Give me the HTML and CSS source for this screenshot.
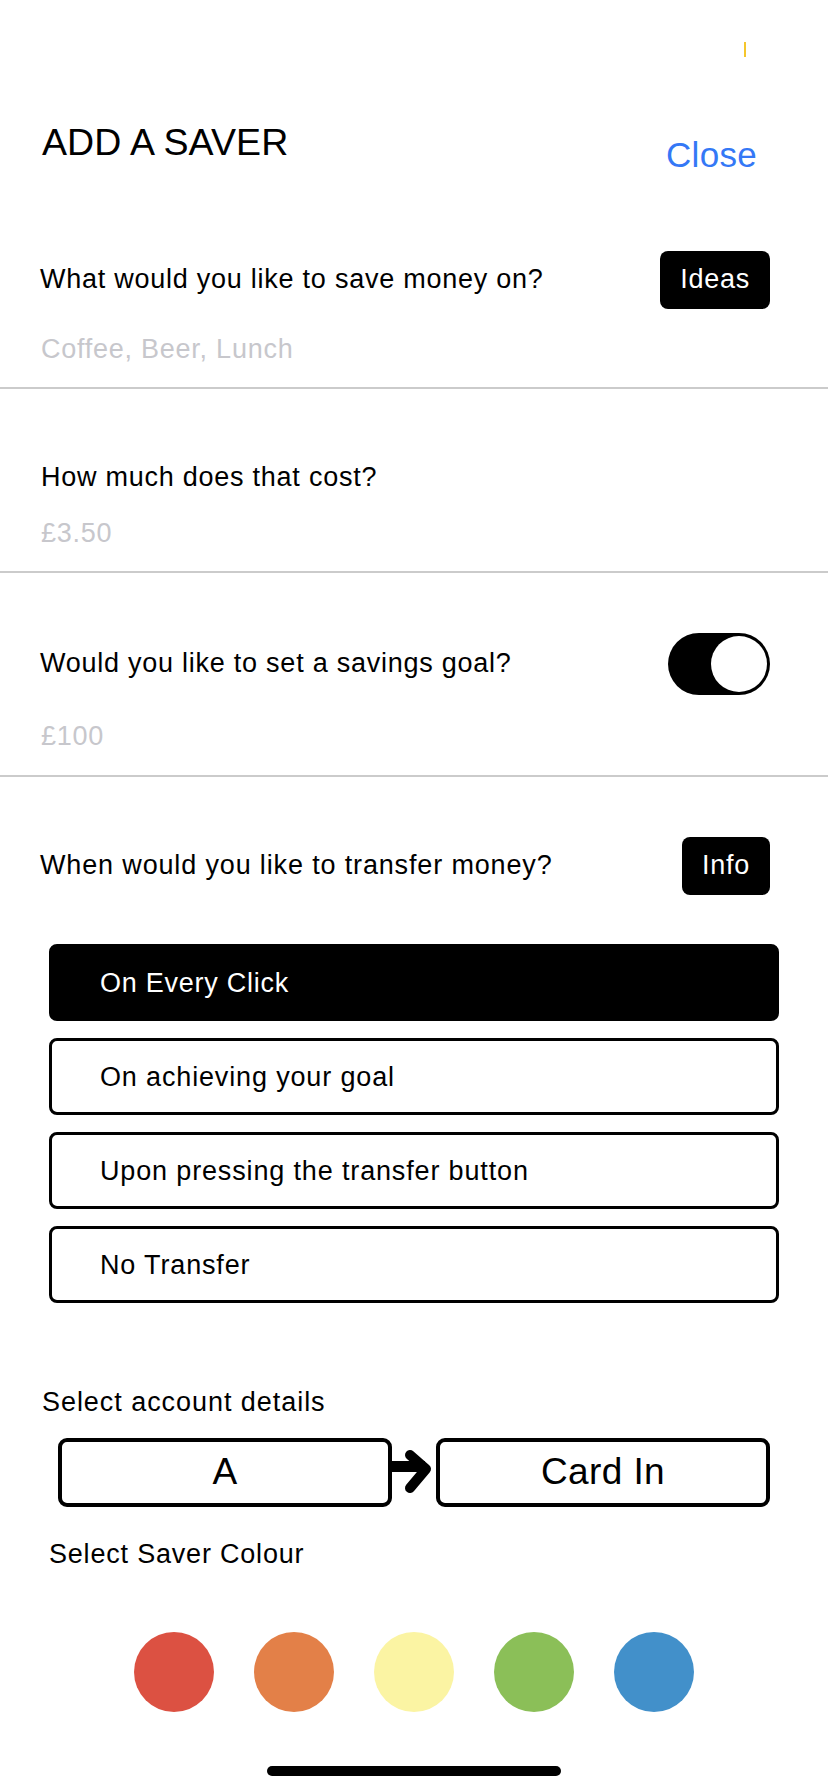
FILE: index.html
```html
<!DOCTYPE html>
<html lang="en">
<head>
<meta charset="utf-8">
<title>Add a Saver</title>
<link rel="stylesheet" href="styles.css">
</head>
<body>
<div class="screen">
  <span class="status-mark"></span>

  <header class="header">
    <h1 class="title">ADD A SAVER</h1>
    <a class="close">Close</a>
  </header>

  <section class="field">
    <div class="row">
      <span class="label">What would you like to save money on?</span>
      <span class="btn">Ideas</span>
    </div>
    <div class="placeholder">Coffee, Beer, Lunch</div>
  </section>

  <section class="field field-plain">
    <div class="label">How much does that cost?</div>
    <div class="placeholder">£3.50</div>
  </section>

  <section class="field field-toggle">
    <div class="row">
      <span class="label">Would you like to set a savings goal?</span>
      <span class="toggle"><span class="knob"></span></span>
    </div>
    <div class="placeholder">£100</div>
  </section>

  <section class="field field-last">
    <div class="row">
      <span class="label">When would you like to transfer money?</span>
      <span class="btn">Info</span>
    </div>
  </section>

  <div class="options">
    <div class="option option-selected">On Every Click</div>
    <div class="option">On achieving your goal</div>
    <div class="option">Upon pressing the transfer button</div>
    <div class="option">No Transfer</div>
  </div>

  <div class="section-title">Select account details</div>
  <div class="account">
    <div class="account-box">A</div>
    <svg class="arrow" width="44" height="69" viewBox="0 0 44 69" aria-hidden="true">
      <path d="M0 28.5 H33" stroke="#000" stroke-width="11" fill="none"/>
      <path d="M18 17 L34 31 L18 50" stroke="#000" stroke-width="10" stroke-linecap="round" stroke-linejoin="round" fill="none"/>
    </svg>
    <div class="account-box">Card In</div>
  </div>

  <div class="section-title colour-title">Select Saver Colour</div>
  <div class="colours">
    <span class="swatch swatch-red"></span>
    <span class="swatch swatch-orange"></span>
    <span class="swatch swatch-yellow"></span>
    <span class="swatch swatch-green"></span>
    <span class="swatch swatch-blue"></span>
  </div>

  <span class="home-indicator"></span>
</div>
</body>
</html>
```

FILE: styles.css
```css
* { box-sizing: border-box; }

html, body {
  margin: 0;
  padding: 0;
  background: #fff;
}

.screen {
  position: relative;
  width: 828px;
  min-height: 1792px;
  background: #fff;
  font-family: "Liberation Sans", Arial, sans-serif;
  color: #000;
  overflow: hidden;
}

.status-mark {
  position: absolute;
  left: 744px;
  top: 42px;
  width: 2px;
  height: 15px;
  background: #f5c62c;
}

.header {
  display: flex;
  justify-content: space-between;
  align-items: flex-start;
  padding: 120px 71px 14px 42px;
}

.title {
  margin: 0;
  font-size: 37.5px;
  line-height: 44px;
  font-weight: 400;
  letter-spacing: 0.1px;
}

.close {
  margin-top: 13px;
  font-size: 35px;
  line-height: 44px;
  color: #3478f6;
  letter-spacing: 0.3px;
}

.field {
  padding: 60px 58px 22px 40px;
  border-bottom: 2px solid #cbcbcb;
}

.field-plain {
  padding-top: 72px;
}

.field-plain .label {
  padding-left: 1px;
}

.field-toggle {
  padding-bottom: 23px;
}

.field-last {
  border-bottom: 0;
  padding-bottom: 0;
}

.row {
  display: flex;
  justify-content: space-between;
  align-items: center;
}

.label {
  font-size: 27px;
  line-height: 32px;
  letter-spacing: 0.75px;
}

.field-last .label {
  letter-spacing: 0.85px;
}

.row .label {
  margin-bottom: 3px;
}

.placeholder {
  margin-top: 24px;
  padding-left: 1px;
  font-size: 27px;
  line-height: 32px;
  letter-spacing: 0.75px;
  color: #c7c7cc;
}

.field-toggle .placeholder {
  margin-top: 25px;
}

.btn {
  display: flex;
  align-items: center;
  height: 58px;
  padding: 0 20px 2px;
  background: #000;
  color: #fff;
  border-radius: 8px;
  font-size: 27px;
  letter-spacing: 0.75px;
}

.toggle {
  display: flex;
  justify-content: flex-end;
  align-items: center;
  width: 102px;
  height: 62px;
  padding: 3px;
  background: #000;
  border-radius: 31px;
}

.knob {
  width: 56px;
  height: 56px;
  border-radius: 50%;
  background: #fff;
}

.options {
  display: flex;
  flex-direction: column;
  gap: 17px;
  margin: 49px 49px 0 49px;
}

.option {
  display: flex;
  align-items: center;
  height: 77px;
  padding-left: 48px;
  border: 3px solid #000;
  border-radius: 8px;
  font-size: 27px;
  line-height: 32px;
  letter-spacing: 0.85px;
}

.option-selected {
  background: #000;
  color: #fff;
  letter-spacing: 0.75px;
}

.section-title {
  margin-top: 83px;
  padding-left: 42px;
  font-size: 27px;
  line-height: 32px;
  letter-spacing: 0.95px;
}

.colour-title {
  margin-top: 31px;
  padding-left: 49px;
  letter-spacing: 0.8px;
}

.account {
  display: flex;
  align-items: stretch;
  margin-top: 20px;
  padding-left: 58px;
  height: 69px;
}

.account-box {
  display: flex;
  justify-content: center;
  align-items: center;
  width: 334px;
  border: 4px solid #000;
  border-radius: 9px;
  font-size: 37px;
  line-height: 44px;
  letter-spacing: 0.4px;
  padding-bottom: 2px;
}

.account-box:last-child {
  width: 334px;
}

.arrow {
  display: block;
  flex: none;
}

.colours {
  display: flex;
  justify-content: center;
  gap: 40px;
  margin-top: 62px;
}

.swatch {
  width: 80px;
  height: 80px;
  border-radius: 50%;
}

.swatch-red { background: #dc5142; }
.swatch-orange { background: #e38048; }
.swatch-yellow { background: #fbf4a3; }
.swatch-green { background: #8bbf58; }
.swatch-blue { background: #4290ca; }

.home-indicator {
  position: absolute;
  left: 267px;
  top: 1766px;
  width: 294px;
  height: 10px;
  border-radius: 5px;
  background: #000;
}
```
